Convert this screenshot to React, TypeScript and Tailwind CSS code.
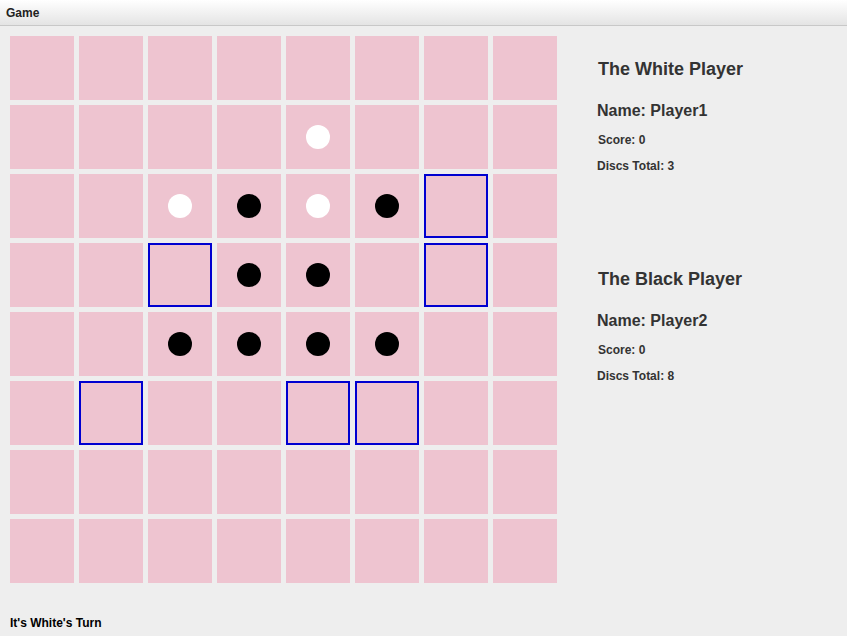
type Cell = "" | "W" | "B" | "M";

const BOARD: Cell[][] = [
  ["", "", "", "", "", "", "", ""],
  ["", "", "", "", "W", "", "", ""],
  ["", "", "W", "B", "W", "B", "M", ""],
  ["", "", "M", "B", "B", "", "M", ""],
  ["", "", "B", "B", "B", "B", "", ""],
  ["", "M", "", "", "M", "M", "", ""],
  ["", "", "", "", "", "", "", ""],
  ["", "", "", "", "", "", "", ""],
];

function Square({ value }: { value: Cell }) {
  return (
    <div
      className={
        "w-[64px] h-[64px] bg-[#eec4d0] flex items-center justify-center " +
        (value === "M" ? "border-2 border-[#0000d0]" : "")
      }
    >
      {value === "W" && <div className="w-[24px] h-[24px] rounded-full bg-white" />}
      {value === "B" && <div className="w-[24px] h-[24px] rounded-full bg-black" />}
    </div>
  );
}

function PlayerInfo({ title, name, discs }: { title: string; name: string; discs: number }) {
  return (
    <div className="text-[#333333] font-bold">
      <div className="text-[18px] leading-[22px] pl-px">{title}</div>
      <div className="text-[16px] leading-[20px] mt-[21px]">Name: {name}</div>
      <div className="text-[12px] leading-[14px] mt-[12px] pl-px">Score: 0</div>
      <div className="text-[12px] leading-[14px] mt-[12px]">Discs Total: {discs}</div>
    </div>
  );
}

export default function App() {
  return (
    <div
      className="w-[847px] h-[636px] bg-[#eeeeee] flex flex-col overflow-hidden"
      style={{ fontFamily: '"Liberation Sans", Arial, sans-serif' }}
    >
      <div className="h-[26px] bg-gradient-to-b from-white to-[#e4e4e4] border-b border-[#c8c8c8] flex items-center px-[6px] text-[12px] font-bold text-[#222]">
        Game
      </div>
      <div className="flex">
        <div className="grid grid-cols-8 gap-[5px] ml-[10px] mt-[10px]">
          {BOARD.flat().map((v, i) => (
            <Square key={i} value={v} />
          ))}
        </div>
        <div className="ml-[40px] mt-[32px] flex flex-col">
          <PlayerInfo title="The White Player" name="Player1" discs={3} />
          <div className="mt-[95px]">
            <PlayerInfo title="The Black Player" name="Player2" discs={8} />
          </div>
        </div>
      </div>
      <div className="mt-[31px] ml-[10px] text-[12px] font-bold text-black">It's White's Turn</div>
    </div>
  );
}
